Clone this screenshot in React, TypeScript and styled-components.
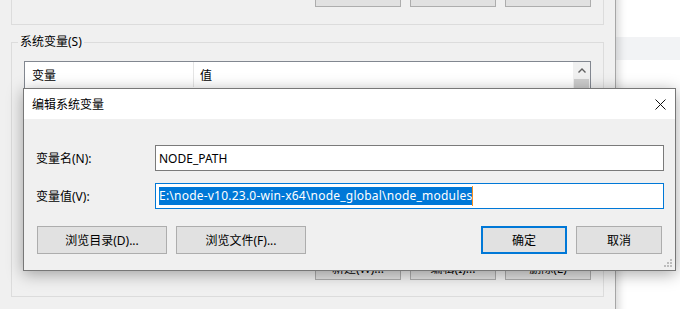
import React from 'react';
import styled, { createGlobalStyle } from 'styled-components';

const GlobalStyle = createGlobalStyle`
  html, body {
    margin: 0;
    padding: 0;
    background: #ffffff;
  }
  body {
    font-family: "Noto Sans", "Noto Sans CJK SC", sans-serif;
    font-size: 12px;
    color: #000000;
  }
`;

interface VarButtonsProps {
  labels: Array<string>;
}

const VarButtons = ({ labels }: VarButtonsProps): JSX.Element => (
  <ButtonBar>
    {labels.map((label, i) => (
      <SmallButton key={i}>{label}</SmallButton>
    ))}
  </ButtonBar>
);

const ChevronUp = (): JSX.Element => (
  <svg width="8" height="5" viewBox="0 0 8 5">
    <path d="M0.5 4.5 L4 1 L7.5 4.5" fill="none" stroke="#606060" strokeWidth="1.4" />
  </svg>
);

const CloseIcon = (): JSX.Element => (
  <svg width="11" height="11" viewBox="0 0 11 11">
    <path d="M0.5 0.5 L10.5 10.5 M10.5 0.5 L0.5 10.5" stroke="#111" strokeWidth="1" />
  </svg>
);

const SizeGrip = (): JSX.Element => (
  <svg width="9" height="9" viewBox="0 0 9 9">
    {[[6, 0], [3, 3], [6, 3], [0, 6], [3, 6], [6, 6]].map(([x, y]) => (
      <rect key={`${x}-${y}`} x={x} y={y} width="2" height="2" fill="#bdbdbd" />
    ))}
  </svg>
);

function EnvironmentWindow(): JSX.Element {
  return (
    <EnvWindow>
      {/* user variable buttons: only their lower edge is on screen */}
      <UserGroup>
        <VarButtons labels={['', '', '']} />
      </UserGroup>
      <SystemGroup>
        <GroupLegend>系统变量(S)</GroupLegend>
        <GroupBody>
          <ListView>
            <ListMain>
              <ListHeader>
                <HeaderCell first>变量</HeaderCell>
                <HeaderCell>值</HeaderCell>
              </ListHeader>
            </ListMain>
            <ScrollBar>
              <ScrollArrow>
                <ChevronUp />
              </ScrollArrow>
              <ScrollThumb />
            </ScrollBar>
          </ListView>
          <VarButtons labels={['新建(W)...', '编辑(I)...', '删除(L)']} />
        </GroupBody>
      </SystemGroup>
    </EnvWindow>
  );
}

function EditDialog(): JSX.Element {
  return (
    <Dialog>
      <TitleBar>
        <TitleText>编辑系统变量</TitleText>
        <CloseButton>
          <CloseIcon />
        </CloseButton>
      </TitleBar>
      <DialogBody>
        <FieldRow>
          <FieldLabel>变量名(N):</FieldLabel>
          <TextBox>NODE_PATH</TextBox>
        </FieldRow>
        <FieldRow>
          <FieldLabel>变量值(V):</FieldLabel>
          <TextBox focused>
            <Selection>E:\node-v10.23.0-win-x64\node_global\node_modules</Selection>
            <Caret />
          </TextBox>
        </FieldRow>
        <DialogButtons>
          <DialogButton wide>浏览目录(D)...</DialogButton>
          <DialogButton wide>浏览文件(F)...</DialogButton>
          <Spacer />
          <DialogButton primary>确定</DialogButton>
          <DialogButton>取消</DialogButton>
        </DialogButtons>
        <GripCorner>
          <SizeGrip />
        </GripCorner>
      </DialogBody>
    </Dialog>
  );
}

export default function App(): JSX.Element {
  return (
    <>
      <GlobalStyle />
      <Desktop>
        <SettingsWindow>
          <SettingsRow />
        </SettingsWindow>
        <EnvironmentWindow />
        <EditDialog />
      </Desktop>
    </>
  );
}

const Desktop = styled.div`
  position: relative;
  width: 680px;
  height: 309px;
  overflow: hidden;
  background: #ffffff;
`;

const SettingsWindow = styled.div`
  position: absolute;
  left: 590px;
  top: 0;
  width: 90px;
  height: 309px;
  background: #ffffff;
  padding-top: 37px;
  box-sizing: border-box;
`;

const SettingsRow = styled.div`
  height: 23px;
  background: #f2f3f5;
`;

const EnvWindow = styled.div`
  position: absolute;
  left: -10px;
  top: -60px;
  width: 626px;
  height: 400px;
  box-sizing: border-box;
  background: #f0f0f0;
  border-right: 1px solid #a6a6a6;
  box-shadow: 3px 0 8px rgba(0, 0, 0, 0.16);
  padding: 0 11px 0 21px;
  display: flex;
  flex-direction: column;
`;

const UserGroup = styled.div`
  height: 85px;
  box-sizing: border-box;
  border: 1px solid #dcdcdc;
  border-top: none;
  padding: 0 12px 17px;
  display: flex;
  align-items: flex-end;
  justify-content: flex-end;
`;

const SystemGroup = styled.fieldset`
  margin: 9px 0 0;
  padding: 0;
  border: 1px solid #dcdcdc;
  min-width: 0;
`;

const GroupLegend = styled.legend`
  margin-left: 6px;
  padding: 0 2px;
  line-height: 16px;
  font-size: 12px;
  color: #000;
`;

const GroupBody = styled.div`
  padding: 11px 12px 16px;
  display: flex;
  flex-direction: column;
  gap: 11px;
`;

const ListView = styled.div`
  height: 184px;
  box-sizing: border-box;
  border: 1px solid #828790;
  background: #ffffff;
  display: flex;
`;

const ListMain = styled.div`
  flex: 1;
  display: flex;
  flex-direction: column;
`;

const ListHeader = styled.div`
  height: 25px;
  display: flex;
  align-items: stretch;
`;

const HeaderCell = styled.div<{ first?: boolean }>`
  box-sizing: border-box;
  width: ${({ first }) => (first ? '169px' : 'auto')};
  flex: ${({ first }) => (first ? 'none' : '1')};
  padding-left: ${({ first }) => (first ? '7px' : '6px')};
  border-right: ${({ first }) => (first ? '1px solid #e5e5e5' : 'none')};
  display: flex;
  align-items: center;
`;

const ScrollBar = styled.div`
  width: 17px;
  padding: 0 1px;
  box-sizing: border-box;
  background: #f0f0f0;
  display: flex;
  flex-direction: column;
`;

const ScrollArrow = styled.div`
  height: 17px;
  display: flex;
  align-items: center;
  justify-content: center;
`;

const ScrollThumb = styled.div`
  height: 60px;
  background: #cdcdcd;
`;

const ButtonBar = styled.div`
  display: flex;
  justify-content: flex-end;
  gap: 9px;
`;

const SmallButton = styled.div`
  width: 86px;
  height: 24px;
  box-sizing: border-box;
  background: #e1e1e1;
  border: 1px solid #adadad;
  display: flex;
  align-items: center;
  justify-content: center;
`;

const Dialog = styled.div`
  position: absolute;
  left: 23px;
  top: 88px;
  width: 653px;
  height: 183px;
  box-sizing: border-box;
  border: 1px solid #777777;
  background: #f0f0f0;
  box-shadow: 0 3px 15px rgba(0, 0, 0, 0.34);
  display: flex;
  flex-direction: column;
`;

const TitleBar = styled.div`
  height: 30px;
  background: #ffffff;
  display: flex;
  align-items: center;
  justify-content: space-between;
  padding-left: 8px;
`;

const TitleText = styled.span`
  font-size: 12px;
`;

const CloseButton = styled.div`
  width: 30px;
  height: 30px;
  display: flex;
  align-items: center;
  justify-content: center;
`;

const DialogBody = styled.div`
  position: relative;
  flex: 1;
  padding: 26px 11px 0 12px;
  display: flex;
  flex-direction: column;
  gap: 12px;
`;

const FieldRow = styled.div`
  display: flex;
  align-items: center;
  height: 26px;
`;

const FieldLabel = styled.div`
  width: 119px;
  flex: none;
`;

const TextBox = styled.div<{ focused?: boolean }>`
  flex: 1;
  height: 26px;
  box-sizing: border-box;
  border: 1px solid ${({ focused }) => (focused ? '#0078d7' : '#7a7a7a')};
  background: #ffffff;
  padding-left: 3px;
  display: flex;
  align-items: center;
  white-space: nowrap;
`;

const Selection = styled.span`
  background: #0078d7;
  color: #ffffff;
  line-height: 18px;
  letter-spacing: 0.22px;
`;

const Caret = styled.span`
  width: 1px;
  height: 20px;
  background: #f7901e;
`;

const DialogButtons = styled.div`
  margin-top: 5px;
  padding: 0 2px 0 1px;
  display: flex;
  gap: 9px;
`;

const Spacer = styled.div`
  flex: 1;
`;

const DialogButton = styled.div<{ wide?: boolean; primary?: boolean }>`
  width: ${({ wide }) => (wide ? '130px' : '86px')};
  height: 28px;
  box-sizing: border-box;
  background: #e1e1e1;
  border: ${({ primary }) => (primary ? '2px solid #0078d7' : '1px solid #adadad')};
  display: flex;
  align-items: center;
  justify-content: center;
`;

const GripCorner = styled.div`
  position: absolute;
  right: 2px;
  bottom: 2px;
  display: flex;
`;
